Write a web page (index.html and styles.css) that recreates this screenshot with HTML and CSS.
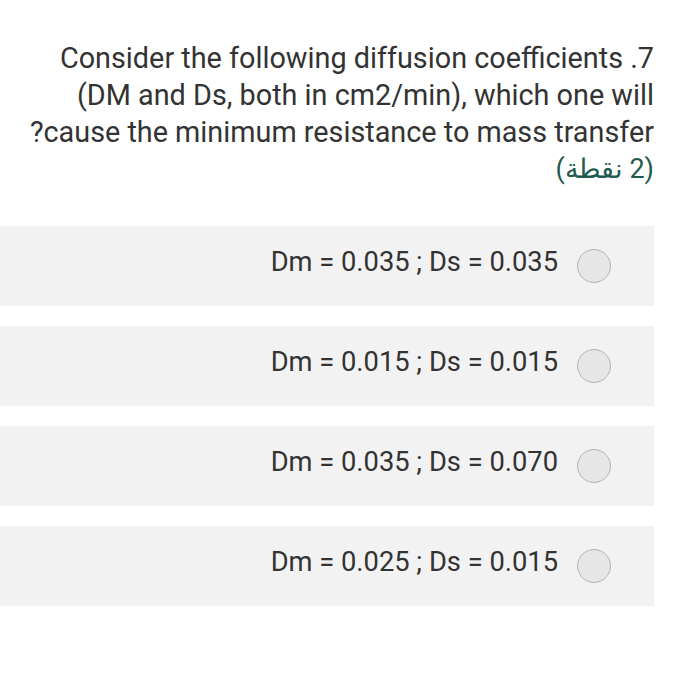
FILE: index.html
```html
<!DOCTYPE html>
<html>
<head>
<meta charset="utf-8">
<link rel="stylesheet" href="styles.css">
</head>
<body>
<div class="page" dir="rtl">
  <div class="question">
    <p class="qtext">7. Consider the following diffusion coefficients (DM and Ds, both in cm2/min), which one will cause the minimum resistance to mass transfer?</p>
    <p class="points">(2 نقطة)</p>
  </div>
  <div class="options">
    <label class="option"><span class="radio"></span><span class="otext" dir="ltr">Dm = 0.035 ; Ds = 0.035</span></label>
    <label class="option"><span class="radio"></span><span class="otext" dir="ltr">Dm = 0.015 ; Ds = 0.015</span></label>
    <label class="option"><span class="radio"></span><span class="otext" dir="ltr">Dm = 0.035 ; Ds = 0.070</span></label>
    <label class="option"><span class="radio"></span><span class="otext" dir="ltr">Dm = 0.025 ; Ds = 0.015</span></label>
  </div>
</div>
</body>
</html>
```
FILE: styles.css
```css
html, body {
  margin: 0;
  padding: 0;
  background: #ffffff;
}
.page {
  width: 654px;
  font-family: Roboto, "Noto Sans", sans-serif;
  color: #333333;
  padding-top: 40px;
}
.question {
  padding: 0 0 0 14px;
}
.qtext {
  margin: 0;
  font-size: 28.8px;
  line-height: 37px;
  text-align: right;
}
.points {
  margin: 0;
  font-size: 27px;
  line-height: 37px;
  color: #1f5b4f;
}
.options {
  margin-top: 38px;
  display: flex;
  flex-direction: column;
  gap: 20px;
}
.option {
  height: 80px;
  background: #f2f2f2;
  display: flex;
  align-items: center;
  gap: 19px;
  padding-right: 43px;
  box-sizing: border-box;
}
.radio {
  width: 34px;
  height: 34px;
  border-radius: 50%;
  background: #e6e6e6;
  border: 1.5px solid #b5b5b5;
  box-sizing: border-box;
  flex: none;
}
.otext {
  font-size: 27.3px;
  color: #333333;
  margin-bottom: 8px;
}
```
